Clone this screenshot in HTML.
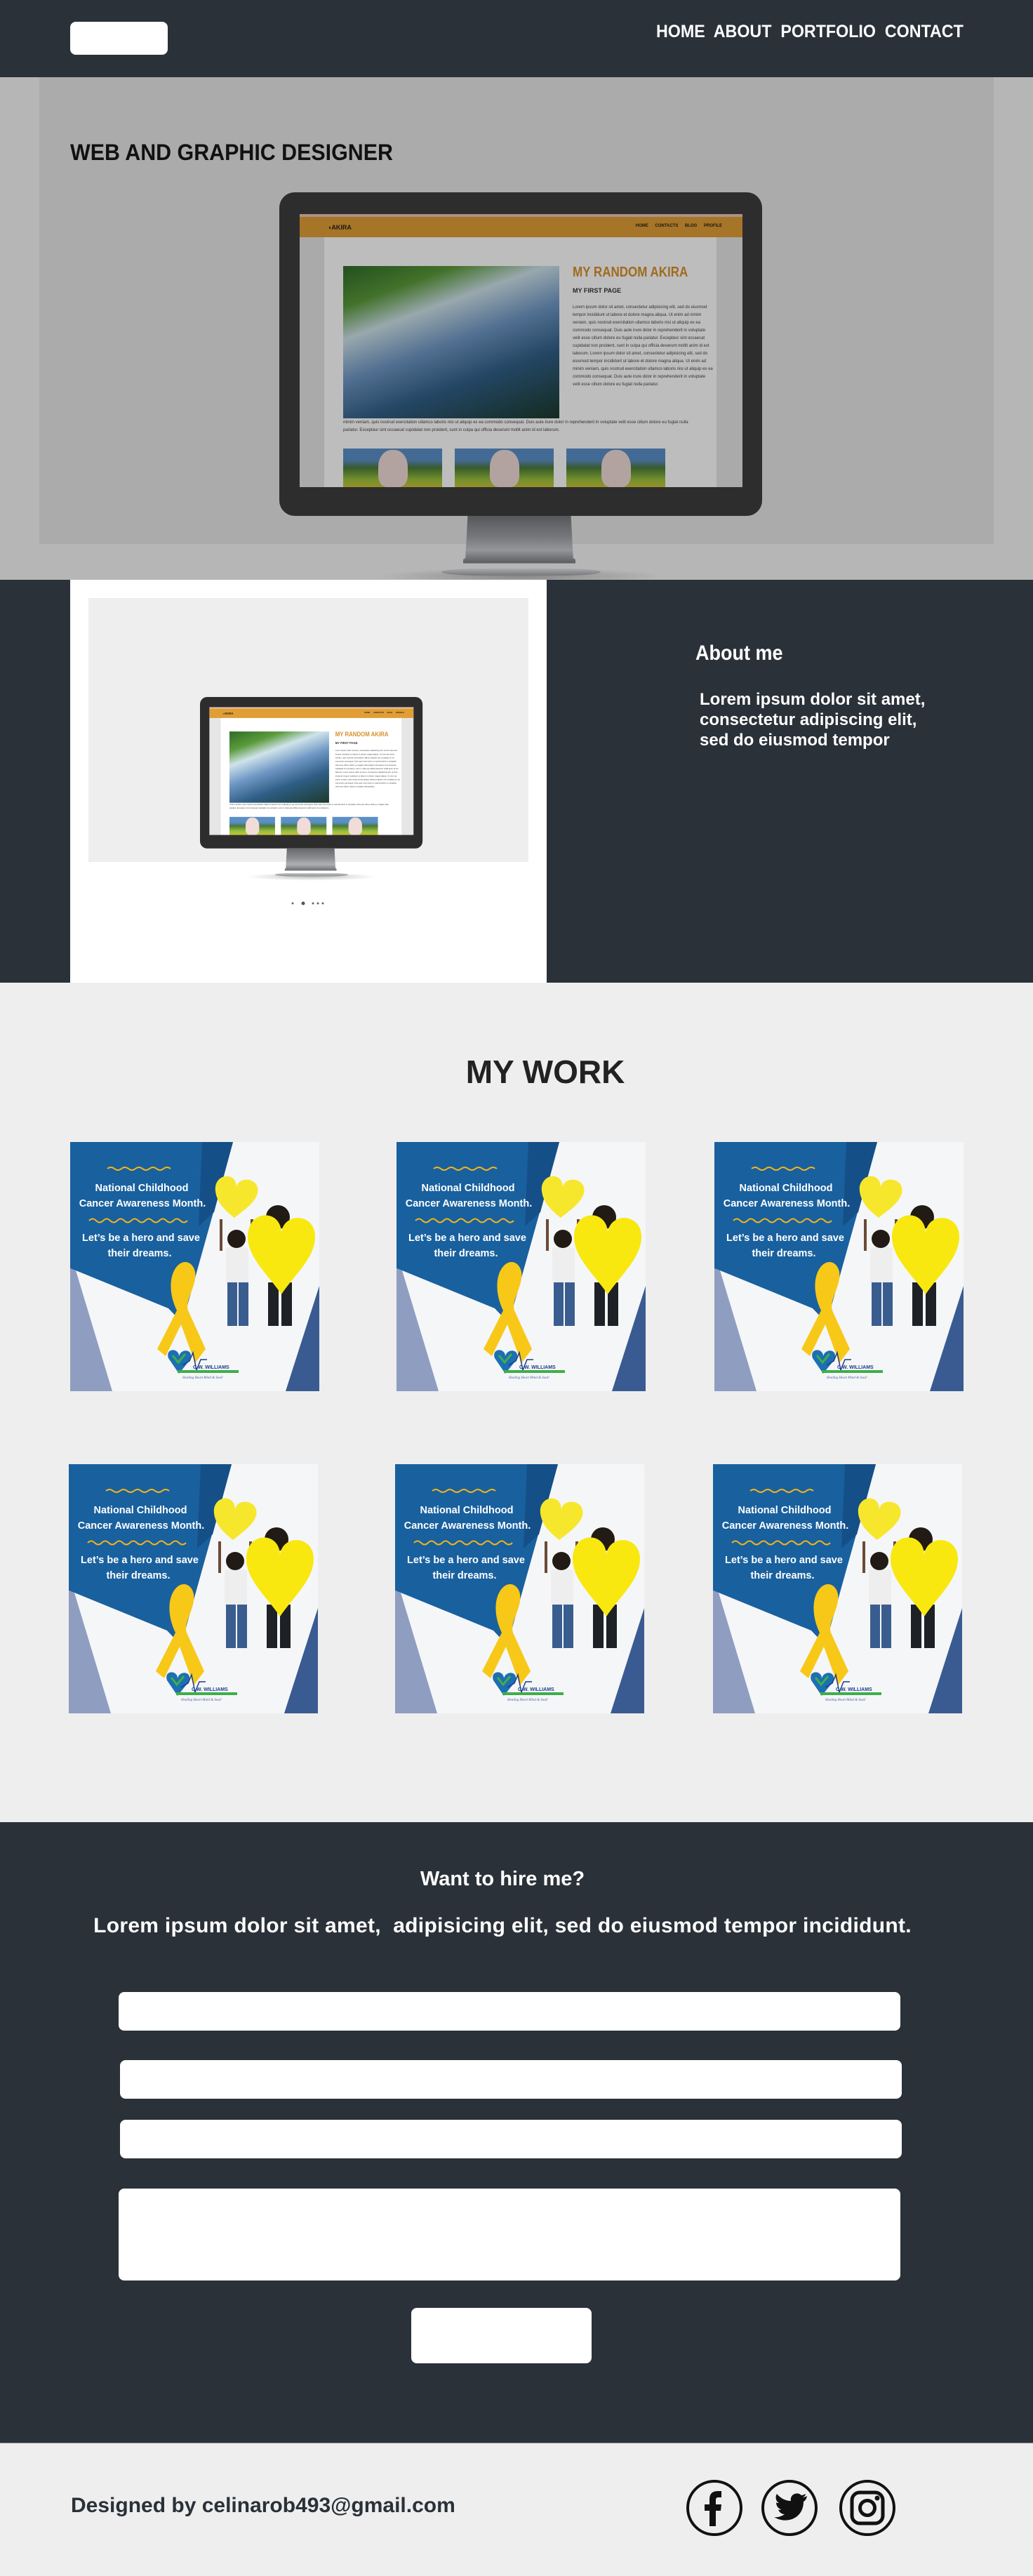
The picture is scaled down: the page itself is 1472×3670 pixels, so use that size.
<!DOCTYPE html>
<html><head><meta charset="utf-8">
<style>
*{margin:0;padding:0;box-sizing:border-box}
body{width:1472px;height:3670px;position:relative;font-family:"Liberation Sans",Arial,sans-serif;background:#eeeeee;overflow:hidden}
.abs{position:absolute}
.dark{background:#2a3138}
.mon{position:absolute;width:688px;height:560px}
.frame{position:absolute;left:0;top:0;width:688px;height:461px;background:#2d2d2d;border-radius:22px}
.scr{position:absolute;left:29px;top:31px;width:631px;height:389px;background:#e6e6e6;overflow:hidden}
.scr .hd{position:absolute;left:0;top:4px;width:631px;height:29px;background:#e09e35}
.scr .pk{position:absolute;left:0;top:0;width:631px;height:4px;background:#e9c4b8}
.scr .ct{position:absolute;left:35px;top:33px;width:559px;height:356px;background:#fff}
.scr .img{position:absolute;left:62px;top:74px;width:308px;height:217px;background:linear-gradient(160deg,#2f6b2a 0%,#5a9a3a 18%,#cfe3ea 32%,#6f97c4 50%,#2f5e86 70%,#1b3a2c 100%)}
.scr .ttl{position:absolute;left:389px;top:72px;font-size:20px;font-weight:bold;color:#d8902a;white-space:nowrap;transform:scaleX(.85);transform-origin:left}
.scr .sub{position:absolute;left:389px;top:104px;font-size:9px;font-weight:bold;color:#333;white-space:nowrap}
.scr .tx{position:absolute;left:389px;top:128px;width:200px;font-size:6px;line-height:11px;color:#444}
.scr .tx2{position:absolute;left:62px;top:292px;width:500px;font-size:6px;line-height:11px;color:#444}
.scr .pig{position:absolute;top:334px;width:141px;height:55px;background:linear-gradient(180deg,#5b8fc9 0%,#5b8fc9 30%,#4a7a3a 50%,#9cc23d 80%,#c8c235 100%)}
.scr .pig:after{content:"";position:absolute;left:50px;top:2px;width:42px;height:53px;border-radius:45% 45% 30% 30%;background:#f2dcd8}
.nav{position:absolute;right:29px;top:10px;font-size:6px;font-weight:bold;color:#222;word-spacing:8px}
.akira{position:absolute;left:40px;top:10px;font-size:9px;font-weight:bold;color:#222}
.stand{position:absolute;left:262px;top:461px;width:160px;height:75px;background:linear-gradient(180deg,#66686c 0%,#8b8d91 40%,#aeb0b3 65%,#5d5f63 95%);clip-path:polygon(4% 0,96% 0,98% 80%,105% 90%,-5% 90%,2% 80%)}
.base{position:absolute;left:231px;top:536px;width:227px;height:10px;background:linear-gradient(#c9cacc,#8a8c90);border-radius:50%/100%}
.shadow{position:absolute;left:140px;top:535px;width:410px;height:24px;border-radius:50%;background:radial-gradient(ellipse,rgba(0,0,0,.25),rgba(0,0,0,0) 70%)}
.fld{position:absolute;background:#fff;border-radius:8px}
.card{position:absolute;width:355px;height:355px}
</style></head><body>

<div class="abs dark" style="left:0;top:0;width:1472px;height:110px"></div>
<div class="abs" style="left:100px;top:31px;width:139px;height:47px;background:#fff;border-radius:8px"></div>
<div class="abs" style="right:99px;top:31px;font-size:25px;font-weight:bold;color:#fff;white-space:nowrap;transform:scaleX(.93);transform-origin:right">HOME&nbsp; ABOUT&nbsp; PORTFOLIO&nbsp; CONTACT</div>

<div class="abs" style="left:0;top:110px;width:1472px;height:716px;background:#b6b6b6"></div>
<div class="abs" style="left:56px;top:110px;width:1360px;height:665px;background:#ababab"></div>
<div class="abs" style="left:100px;top:199px;font-size:32px;font-weight:bold;color:#111;white-space:nowrap;transform:scaleX(.95);transform-origin:left">WEB AND GRAPHIC DESIGNER</div>

<div class="mon" style="left:398px;top:274px">
 <div class="shadow"></div>
 <div class="stand" style="filter:brightness(.85)"></div><div class="base" style="filter:brightness(.85)"></div>
 <div class="frame"></div>
 <div class="scr" style="filter:brightness(.74)">
  <div class="pk"></div><div class="hd"><div class="akira">◖AKIRA</div><div class="nav">HOME CONTACTS BLOG PROFILE</div></div>
  <div class="ct"></div>
  <div class="img"></div>
  <div class="ttl">MY RANDOM AKIRA</div>
  <div class="sub">MY FIRST PAGE</div>
  <div class="tx">Lorem ipsum dolor sit amet, consectetur adipisicing elit, sed do eiusmod tempor incididunt ut labore et dolore magna aliqua. Ut enim ad minim veniam, quis nostrud exercitation ullamco laboris nisi ut aliquip ex ea commodo consequat. Duis aute irure dolor in reprehenderit in voluptate velit esse cillum dolore eu fugiat nulla pariatur. Excepteur sint occaecat cupidatat non proident, sunt in culpa qui officia deserunt mollit anim id est laborum. Lorem ipsum dolor sit amet, consectetur adipisicing elit, sed do eiusmod tempor incididunt ut labore et dolore magna aliqua. Ut enim ad minim veniam, quis nostrud exercitation ullamco laboris nisi ut aliquip ex ea commodo consequat. Duis aute irure dolor in reprehenderit in voluptate velit esse cillum dolore eu fugiat nulla pariatur.</div>
  <div class="tx2">minim veniam, quis nostrud exercitation ullamco laboris nisi ut aliquip ex ea commodo consequat. Duis aute irure dolor in reprehenderit in voluptate velit esse cillum dolore eu fugiat nulla pariatur. Excepteur sint occaecat cupidatat non proident, sunt in culpa qui officia deserunt mollit anim id est laborum.</div>
  <div class="pig" style="left:62px"></div><div class="pig" style="left:221px"></div><div class="pig" style="left:380px"></div>
 </div>
</div>

<div class="abs dark" style="left:0;top:826px;width:1472px;height:574px"></div>
<div class="abs" style="left:100px;top:826px;width:679px;height:574px;background:#fff"></div>
<div class="abs" style="left:126px;top:852px;width:627px;height:376px;background:#eeeeee"></div>
<div class="mon" style="left:285px;top:993px;transform:scale(.461,.468);transform-origin:0 0">
 <div class="shadow"></div>
 <div class="stand"></div><div class="base"></div>
 <div class="frame"></div>
 <div class="scr">
  <div class="pk"></div><div class="hd"><div class="akira">◖AKIRA</div><div class="nav">HOME CONTACTS BLOG PROFILE</div></div>
  <div class="ct"></div>
  <div class="img"></div>
  <div class="ttl">MY RANDOM AKIRA</div>
  <div class="sub">MY FIRST PAGE</div>
  <div class="tx">Lorem ipsum dolor sit amet, consectetur adipisicing elit, sed do eiusmod tempor incididunt ut labore et dolore magna aliqua. Ut enim ad minim veniam, quis nostrud exercitation ullamco laboris nisi ut aliquip ex ea commodo consequat. Duis aute irure dolor in reprehenderit in voluptate velit esse cillum dolore eu fugiat nulla pariatur. Excepteur sint occaecat cupidatat non proident, sunt in culpa qui officia deserunt mollit anim id est laborum. Lorem ipsum dolor sit amet, consectetur adipisicing elit, sed do eiusmod tempor incididunt ut labore et dolore magna aliqua. Ut enim ad minim veniam, quis nostrud exercitation ullamco laboris nisi ut aliquip ex ea commodo consequat. Duis aute irure dolor in reprehenderit in voluptate velit esse cillum dolore eu fugiat nulla pariatur.</div>
  <div class="tx2">minim veniam, quis nostrud exercitation ullamco laboris nisi ut aliquip ex ea commodo consequat. Duis aute irure dolor in reprehenderit in voluptate velit esse cillum dolore eu fugiat nulla pariatur. Excepteur sint occaecat cupidatat non proident, sunt in culpa qui officia deserunt mollit anim id est laborum.</div>
  <div class="pig" style="left:62px"></div><div class="pig" style="left:221px"></div><div class="pig" style="left:380px"></div>
 </div>
</div>
<svg class="abs" style="left:410px;top:1280px" width="60" height="14"><circle cx="7" cy="7" r="1.5" fill="#666"/><circle cx="22" cy="7" r="2.5" fill="#555"/><circle cx="36" cy="7" r="1.5" fill="#666"/><circle cx="43" cy="7" r="1.5" fill="#666"/><circle cx="50" cy="7" r="1.5" fill="#666"/></svg>
<div class="abs" style="left:991px;top:914px;font-size:30px;font-weight:bold;color:#fff;white-space:nowrap;transform:scaleX(.9);transform-origin:left">About me</div>
<div class="abs" style="left:997px;top:982px;font-size:24px;font-weight:bold;line-height:29px;color:#fff;white-space:nowrap">Lorem ipsum dolor sit amet,<br>consectetur adipiscing elit,<br>sed do eiusmod tempor</div>

<div class="abs" style="left:0;top:1400px;width:1472px;height:1196px;background:#eeeeee"></div>
<div class="abs" style="left:0;top:1500px;width:1554px;text-align:center;font-size:46px;font-weight:bold;color:#222">MY WORK</div>

<svg class="card" style="left:100px;top:1627px" viewBox="0 0 355 355">
<rect width="355" height="355" fill="#f5f6f8"/>
<polygon points="0,180 8,183 60,355 0,355" fill="#8f9dc0"/>
<polygon points="355,205 355,355 307,355" fill="#3a5b91"/>
<polygon points="0,0 232,0 160,258 140,237 8,183 0,180" fill="#19609e"/>
<polygon points="188,0 232,0 205,100 183,120" fill="#154f88"/>
<path d="M53,38 q5,-4 10,0 t10,0 t10,0 t10,0 t10,0 t10,0 t10,0 t10,0 t10,0" stroke="#f2b51b" stroke-width="2" fill="none"/>
<path d="M27,112 q5,-5 10,0 t10,0 t10,0 t10,0 t10,0 t10,0 t10,0 t10,0 t10,0 t10,0 t10,0 t10,0 t10,0 t10,0" stroke="#f3b51a" stroke-width="2" fill="none"/>
<g font-family="Liberation Sans,Arial,sans-serif" font-weight="bold" fill="#fff" font-size="14.5" text-anchor="middle">
<text x="102" y="70">National Childhood</text><text x="103" y="92">Cancer Awareness Month.</text>
<text x="101" y="141">Let’s be a hero and save</text><text x="99" y="163">their dreams.</text></g>
<path d="M215,95 c-3,-25 30,-30 30,-5 c2,-18 35,-14 30,8 c-4,15 -25,28 -33,35 c-10,-8 -25,-20 -27,-38z" fill="#f6e72c" transform="translate(-8,-25)"/>
<rect x="222" y="150" width="32" height="52" rx="4" fill="#eeeeee"/>
<rect x="224" y="200" width="14" height="62" fill="#3a5d8f"/><rect x="240" y="200" width="14" height="62" fill="#3a5d8f"/>
<rect x="213" y="110" width="4" height="45" fill="#6b4a36"/><rect x="257" y="110" width="4" height="45" fill="#6b4a36"/>
<circle cx="237" cy="138" r="13" fill="#221a14"/>
<circle cx="296" cy="107" r="17" fill="#221a14"/>
<rect x="282" y="200" width="15" height="62" fill="#1e2126"/><rect x="301" y="200" width="15" height="62" fill="#1e2126"/>
<path d="M258,135 c0,-40 48,-40 48,-5 c2,-30 48,-30 48,5 c0,30 -30,55 -48,82 c-18,-27 -48,-52 -48,-82z" fill="#f8e810" transform="translate(-5,0)"/>
<path d="M150,180 c10,-15 25,-10 28,5 c3,20 -15,40 -10,55 l25,55 l-15,20 l-20,-55 l-22,45 l-12,-10 l28,-55 c-10,-20 -12,-45 -2,-60z" fill="#f7c818"/>
<path d="M140,308 c-5,-15 15,-15 15,-3 c3,-12 22,-10 16,5 l-16,20z" fill="#1d6fb3"/>
<path d="M146,304 l8,10 l10,-12" stroke="#3fae49" stroke-width="3" fill="none"/>
<polyline points="160,318 170,312 175,300 180,325 186,310 195,310" stroke="#1d3d8a" stroke-width="1.5" fill="none"/>
<text x="175" y="323" font-family="Liberation Sans,Arial,sans-serif" font-size="7" font-weight="bold" fill="#1d3d8a">C.W. WILLIAMS</text>
<rect x="153" y="325" width="87" height="4" fill="#3fae49"/>
<text x="160" y="337" font-family="Liberation Serif,serif" font-style="italic" font-size="5" fill="#4a5aa0">Healing Heart Mind &amp; Soul!</text>
</svg>
<script>
var c=document.querySelector('.card');
[[565,1627],[1018,1627],[98,2086],[563,2086],[1016,2086]].forEach(function(p){var n=c.cloneNode(true);n.style.left=p[0]+'px';n.style.top=p[1]+'px';document.body.appendChild(n);});
</script>

<div class="abs dark" style="left:0;top:2596px;width:1472px;height:884px"></div>
<div class="abs" style="left:0;top:2661px;width:1432px;text-align:center;font-size:29px;font-weight:bold;color:#fff">Want to hire me?</div>
<div class="abs" style="left:0;top:2727px;width:1432px;text-align:center;font-size:30px;font-weight:bold;color:#fff;white-space:pre;letter-spacing:.3px">Lorem ipsum dolor sit amet,  adipisicing elit, sed do eiusmod tempor incididunt.</div>
<div class="fld" style="left:169px;top:2838px;width:1114px;height:55px"></div>
<div class="fld" style="left:171px;top:2935px;width:1114px;height:55px"></div>
<div class="fld" style="left:171px;top:3020px;width:1114px;height:55px"></div>
<div class="fld" style="left:169px;top:3118px;width:1114px;height:131px"></div>
<div class="fld" style="left:586px;top:3288px;width:257px;height:79px"></div>

<div class="abs" style="left:0;top:3480px;width:1472px;height:190px;background:#eeeeee;border-top:1px solid #888"></div>
<div class="abs" style="left:101px;top:3553px;font-size:30px;font-weight:bold;color:#2a3138;white-space:nowrap">Designed by celinarob493@gmail.com</div>
<svg class="abs" style="left:970px;top:3525px" width="320" height="96" viewBox="0 0 320 96">
<g fill="none" stroke="#111" stroke-width="4"><circle cx="48" cy="48" r="38"/><circle cx="155" cy="48" r="38"/><circle cx="266" cy="48" r="38"/></g>
<path d="M41,74 V52 H34 V43 H41 V36 C41,28 45,24 53,24 H58 V33 H54 C51,33 50,34 50,37 V43 H58 L57,52 H50 V74 Z" fill="#111"/>
<path d="M180,31 c-2,1 -4,2 -6,2 c2,-1 4,-3 4,-5 c-2,1 -4,2 -6,2 c-6,-6 -17,-1 -15,8 c-8,0 -15,-4 -20,-10 c-3,5 -1,11 3,13 c-2,0 -3,0 -4,-1 c0,5 3,9 7,10 c-1,1 -3,1 -4,0 c1,4 5,7 9,7 c-4,3 -10,5 -15,4 c18,11 42,2 42,-22 c2,-1 4,-3 5,-8z" fill="#111"/>
<rect x="244" y="26" width="44" height="44" rx="11" fill="none" stroke="#111" stroke-width="5"/>
<circle cx="266" cy="48" r="10.5" fill="none" stroke="#111" stroke-width="5"/>
<circle cx="280" cy="34" r="3.5" fill="#111"/>
</svg>
</body></html>
